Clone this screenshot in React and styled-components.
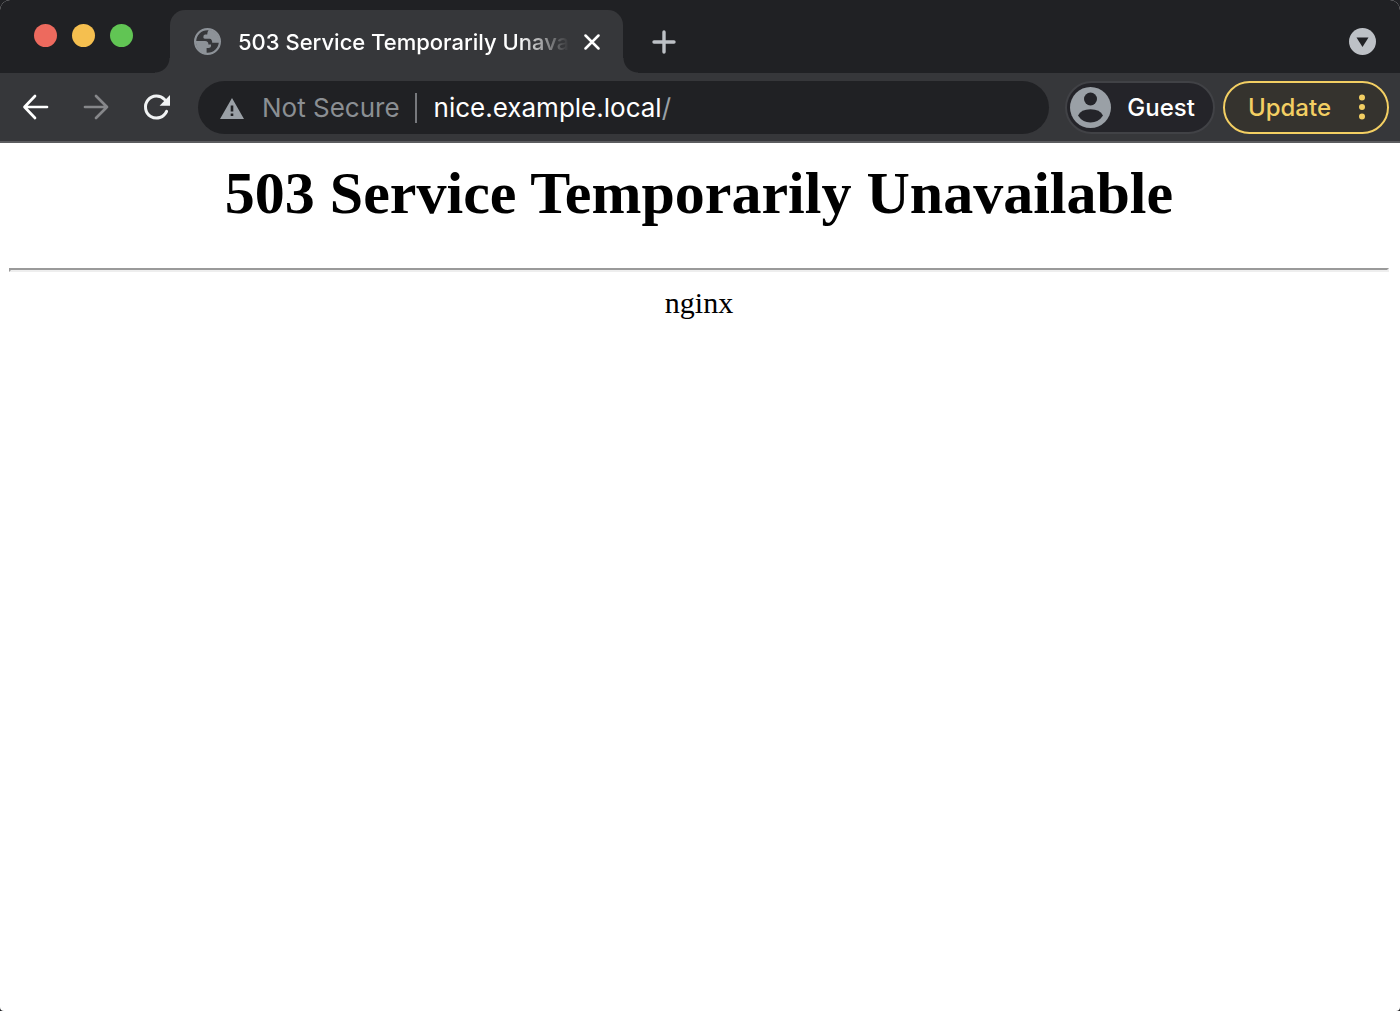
import React from 'react';
import styled, { createGlobalStyle } from 'styled-components';

const GlobalStyle = createGlobalStyle`
  *, *::before, *::after { box-sizing: border-box; }
  body { margin: 0; background: #202124; }
  button, input { font: inherit; }
`;

const Window = styled.div`
  min-height: 100vh;
  display: flex;
  flex-direction: column;
  overflow: hidden;
  border-radius: 10px 10px 4px 4px;
  background: #fff;
  font-family: Inter, 'Liberation Sans', sans-serif;
`;

const TabStrip = styled.header`
  display: flex;
  align-items: flex-end;
  height: 73px;
  background: #202124;
`;

const WindowControls = styled.div`
  display: flex;
  align-self: flex-start;
  gap: 15px;
  width: 170px;
  padding: 24px 0 0 34px;
`;

const Light = styled.button`
  width: 23px;
  height: 23px;
  padding: 0;
  border: 0;
  border-radius: 50%;
  background: ${(p) => p.$color};
`;

const Tab = styled.div`
  position: relative;
  display: flex;
  align-items: center;
  flex: 0 1 453px;
  min-width: 0;
  height: 63px;
  padding: 0 19px 0 24px;
  border-radius: 15px 15px 0 0;
  background: #36373a;
  color: #fff;

  &::before, &::after {
    content: '';
    position: absolute;
    bottom: 0;
    width: 15px;
    height: 15px;
  }
  &::before {
    right: 100%;
    background: radial-gradient(circle at 0 0, #202124 14px, #36373a 15px);
  }
  &::after {
    left: 100%;
    background: radial-gradient(circle at 100% 0, #202124 14px, #36373a 15px);
  }
`;

const TabTitle = styled.span`
  flex: 1;
  min-width: 0;
  margin: 0 11px 0 17px;
  overflow: hidden;
  white-space: nowrap;
  font-size: 22px;
  font-weight: 500;
  line-height: 30px;
  mask-image: linear-gradient(to left, transparent, #000 50px);
`;

const IconButton = styled.button`
  display: grid;
  place-items: center;
  flex: none;
  width: ${(p) => p.$size}px;
  height: ${(p) => p.$size}px;
  padding: 0;
  border: 0;
  background: none;
  color: ${(p) => p.$color || '#fff'};
`;

const NewTab = styled(IconButton)`
  align-self: center;
  margin: 10px auto 0 26px;
`;

const TabSearch = styled(IconButton)`
  align-self: center;
  margin: 10px 24px 0 0;
`;

const Toolbar = styled.nav`
  display: flex;
  align-items: center;
  height: 70px;
  padding: 0 11px 0 20px;
  border-bottom: 2px solid #5b5c5f;
  background: #36373a;
  font-size: 26px;
  line-height: 32px;
`;

const History = styled.div`
  display: flex;
  gap: 30px;
  margin-right: 28px;
`;

const AddressBar = styled.div`
  display: flex;
  align-items: center;
  flex: 1;
  min-width: 0;
  height: 53px;
  padding: 2px 22px 0;
  border-radius: 27px;
  background: #202124;
  color: #9aa0a6;
`;

const Security = styled.button`
  display: flex;
  align-items: center;
  gap: 18px;
  flex: none;
  padding: 0 15px 0 0;
  border: 0;
  background: none;
  color: #8b8f93;
`;

const Divider = styled.span`
  flex: none;
  width: 2px;
  height: 30px;
  margin-right: 17px;
  background: #77797d;
`;

const UrlInput = styled.input`
  field-sizing: content;
  min-width: 0;
  padding: 0;
  border: 0;
  outline: 0;
  background: none;
  color: #fff;
`;

const Pill = styled.button`
  display: flex;
  align-items: center;
  flex: none;
  height: 53px;
  border: 2px solid ${(p) => p.$border};
  border-radius: 27px;
  background: ${(p) => p.$fill};
  color: ${(p) => p.$color};
  font-size: 24px;
  font-weight: 500;
`;

const PillLabel = styled.span`
  padding-top: 2px;
`;

const Profile = styled(Pill)`
  gap: 16px;
  margin: 0 8px 0 16px;
  padding: 0 18px 0 3px;
`;

const Update = styled(Pill)`
  gap: 28px;
  padding: 0 22px 0 23px;
`;

const Page = styled.main`
  flex: 1;
  padding: 15px 11px 0 9px;
  color: #000;
  text-align: center;
  font-family: 'Liberation Serif', serif;
  font-size: 30px;
  line-height: 34px;
`;

const Title = styled.h1`
  margin: 0 0 40px;
  font-size: 60px;
  line-height: 70px;
`;

const Rule = styled.hr`
  height: 4px;
  margin: 0 0 14px;
  border: 2px solid;
  border-color: #9a9a9a #eee #eee #9a9a9a;
`;

const Server = styled.p`
  margin: 0;
`;

const GlobeIcon = () => (
  <svg width="27" height="27" viewBox="0 0 27 27" aria-hidden="true">
    <circle cx="13.5" cy="13.5" r="12.4" fill="none" stroke="#8d9298" strokeWidth="2.2" />
    <path fill="#8d9298" d="M1.5 13H11Q14.6 13.2 14.4 16.5H17V18.3Q16.8 20 14.5 20H12.6V25.5Q3 25 1.5 13ZM15 1.5Q12.8 4.5 13.2 6.6H11Q9.3 7 9.3 9.2Q9.5 10.7 11.3 10.7H15.6Q18.3 11 18.2 14.8H25.6Q25.5 4 15 1.5Z" />
  </svg>
);

const ArrowIcon = ({ forward }) => (
  <svg width="28" height="28" viewBox="0 0 28 28" fill="none" stroke="currentColor" strokeWidth="2.7" strokeLinecap="round" strokeLinejoin="round" aria-hidden="true">
    <path d={forward ? 'M4 14H26M15 3L26 14L15 25' : 'M26 14H4M14 3L3.5 14L14 25'} />
  </svg>
);

const ReloadIcon = () => (
  <svg width="30" height="30" viewBox="0 0 30 30" aria-hidden="true">
    <path d="M26.6 19.4A11 11 0 1 1 24.6 7.6" fill="none" stroke="currentColor" strokeWidth="3" strokeLinecap="round" />
    <path d="M30 3V13.7H19.6Z" fill="currentColor" />
  </svg>
);

const WarningIcon = () => (
  <svg width="24" height="21" viewBox="0 0 24 21" aria-hidden="true">
    <path fill="#9aa0a6" fillRule="evenodd" d="M12 0L24 21H0ZM10.7 7.5V13.5H13.3V7.5ZM10.7 15.5V18H13.3V15.5Z" />
  </svg>
);

const AvatarIcon = () => (
  <svg width="41" height="41" viewBox="0 0 41 41" aria-hidden="true">
    <circle cx="20.5" cy="20.5" r="20.5" fill="#9aa0a6" />
    <circle cx="20.5" cy="12" r="6.5" fill="#242429" />
    <path fill="#242429" d="M8 28.5Q11 22.3 20.5 22.3T33 28.5Q28.5 35.5 20.5 35.5T8 28.5Z" />
  </svg>
);

export default function App() {
  return (
    <>
      <GlobalStyle />
      <Window>
        <TabStrip>
          <WindowControls>
            <Light $color="#ed6a5e" aria-label="Close window" />
            <Light $color="#f5bf4f" aria-label="Minimize window" />
            <Light $color="#61c554" aria-label="Zoom window" />
          </WindowControls>
          <Tab>
            <GlobeIcon />
            <TabTitle>503 Service Temporarily Unavailable</TabTitle>
            <IconButton $size={24} aria-label="Close tab">
              <svg width="16" height="16" viewBox="0 0 16 16" stroke="currentColor" strokeWidth="2.5" strokeLinecap="round">
                <path d="M1.5 1.5L14.5 14.5M14.5 1.5L1.5 14.5" />
              </svg>
            </IconButton>
          </Tab>
          <NewTab $size={30} $color="#bdc1c6" aria-label="New tab">
            <svg width="24" height="24" viewBox="0 0 24 24" stroke="currentColor" strokeWidth="3.4" strokeLinecap="round">
              <path d="M2 12H22M12 2V22" />
            </svg>
          </NewTab>
          <TabSearch $size={27} $color="#bdc1c6" aria-label="Search tabs">
            <svg width="27" height="27" viewBox="0 0 27 27">
              <circle cx="13.5" cy="13.5" r="13.5" fill="currentColor" />
              <path d="M7.5 9.5H19.5L13.5 19Z" fill="#202124" />
            </svg>
          </TabSearch>
        </TabStrip>
        <Toolbar>
          <History>
            <IconButton $size={30} aria-label="Back"><ArrowIcon /></IconButton>
            <IconButton $size={30} $color="#86878a" aria-label="Forward"><ArrowIcon forward /></IconButton>
            <IconButton $size={30} $color="#f1f3f4" aria-label="Reload"><ReloadIcon /></IconButton>
          </History>
          <AddressBar>
            <Security>
              <WarningIcon />
              Not Secure
            </Security>
            <Divider />
            <UrlInput aria-label="Address" defaultValue="nice.example.local" />
            /
          </AddressBar>
          <Profile $border="#414246" $fill="#242429" $color="#fff">
            <AvatarIcon />
            <PillLabel>Guest</PillLabel>
          </Profile>
          <Update $border="#f3cf63" $fill="#35332e" $color="#f3cf63">
            <PillLabel>Update</PillLabel>
            <svg width="6" height="26" viewBox="0 0 6 26" fill="currentColor" aria-hidden="true">
              <circle cx="3" cy="3.5" r="3" />
              <circle cx="3" cy="13" r="3" />
              <circle cx="3" cy="22.5" r="3" />
            </svg>
          </Update>
        </Toolbar>
        <Page>
          <Title>503 Service Temporarily Unavailable</Title>
          <Rule />
          <Server>nginx</Server>
        </Page>
      </Window>
    </>
  );
}
